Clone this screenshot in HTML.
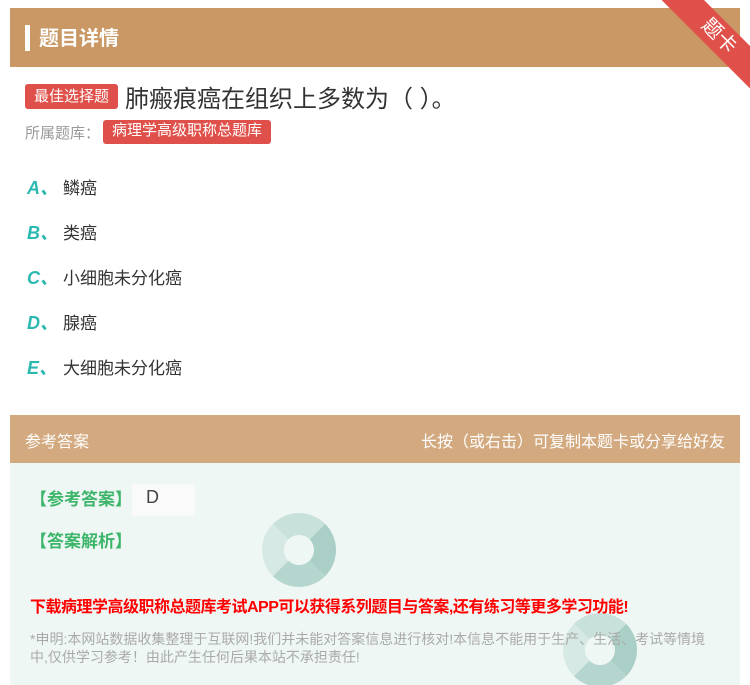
<!DOCTYPE html>
<html><head><meta charset="utf-8"><style>
*{margin:0;padding:0;box-sizing:border-box}
body{width:750px;height:685px;background:#fff;font-family:"Liberation Sans","Noto Sans CJK SC",sans-serif;position:relative;overflow:hidden}
.hd{position:absolute;left:10px;top:8px;width:730px;height:59px;background:#c99865}
.hd .bar{position:absolute;left:15px;top:17px;width:5px;height:26px;background:#fff}
.hd .t{position:absolute;left:29px;top:14px;color:#fff;font-size:20px;font-weight:bold}
.rib{position:absolute;width:140px;height:30px;background:#e0504a;transform:rotate(45deg);transform-origin:0 0;color:#fff;font-size:20px;text-align:center;line-height:30px;left:680px;top:-24px}
.tag{display:inline-block;background:#e0504a;color:#fff;border-radius:3px}
.q{position:absolute;left:25px;top:79px;font-size:24px;color:#333;display:flex;align-items:center}
.q .tag{font-size:15px;padding:2px 9px;margin-right:7px;height:25px;line-height:21px}
.src{position:absolute;left:25px;top:120px;font-size:15px;color:#999;display:flex;align-items:center}
.src .tag{font-size:15px;padding:0 9px;height:24px;line-height:22px;margin-left:3px}
.op{position:absolute;left:27px;font-size:17px;color:#333}
.op b{color:#2bb8b0;font-style:italic;font-size:18px;display:inline-block;width:36px}
.ah{position:absolute;left:10px;top:415px;width:730px;height:48px;background:#d3aa80;color:#fff;font-size:16px}
.ah .l{position:absolute;left:15px;top:13px}
.ah .r{position:absolute;right:15px;top:13px}
.ab{position:absolute;left:10px;top:463px;width:730px;height:222px;background:#eff7f5;overflow:hidden}
.g{position:absolute;color:#3cb56a;font-size:17px;font-weight:bold}
.red{position:absolute;left:30px;top:593px;color:#f00;font-size:16px;font-weight:bold;letter-spacing:-0.5px}
.dec{position:absolute;left:30px;top:630px;width:690px;color:#aaa;font-size:14px;line-height:18px}
.sw{position:absolute;border-radius:50%;border:22px solid #b8d8d0}
</style></head><body>
<div class="hd"><div class="bar"></div><div class="t">题目详情</div></div>
<div class="rib">题卡</div>
<div class="q"><span class="tag">最佳选择题</span>肺瘢痕癌在组织上多数为（ ）。</div>
<div class="src">所属题库：<span class="tag">病理学高级职称总题库</span></div>
<div class="op" style="top:174px"><b>A、</b>鳞癌</div>
<div class="op" style="top:219px"><b>B、</b>类癌</div>
<div class="op" style="top:264px"><b>C、</b>小细胞未分化癌</div>
<div class="op" style="top:309px"><b>D、</b>腺癌</div>
<div class="op" style="top:354px"><b>E、</b>大细胞未分化癌</div>
<div class="ah"><span class="l">参考答案</span><span class="r">长按（或右击）可复制本题卡或分享给好友</span></div>
<div class="ab">
<div class="sw" style="left:252px;top:50px;width:74px;height:74px;border-color:#c9e1db #a9cfc6 #b5d6ce #d6e9e4"></div>
<div class="sw" style="left:553px;top:150px;width:74px;height:74px;border-color:#c9e1db #a9cfc6 #b5d6ce #d6e9e4"></div>
</div>
<div class="g" style="left:30px;top:485px">【参考答案】</div>
<div style="position:absolute;left:132px;top:484px;width:63px;height:32px;background:#fafafa;font-size:18px;color:#444;padding-left:14px;line-height:26px">D</div>
<div class="g" style="left:30px;top:527px">【答案解析】</div>
<div class="red">下载病理学高级职称总题库考试APP可以获得系列题目与答案,还有练习等更多学习功能!</div>
<div class="dec">*申明:本网站数据收集整理于互联网!我们并未能对答案信息进行核对!本信息不能用于生产、生活、考试等情境中,仅供学习参考！由此产生任何后果本站不承担责任!</div>
</body></html>
